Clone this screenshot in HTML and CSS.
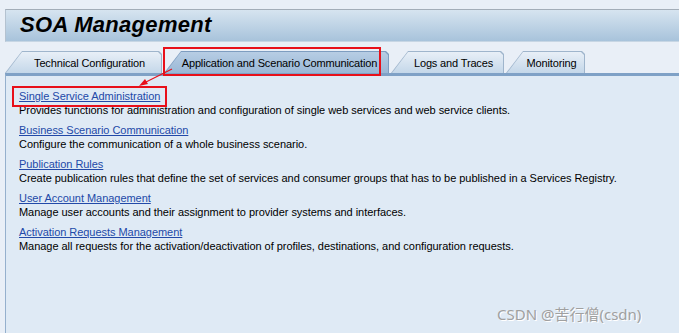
FILE: index.html
```html
<!DOCTYPE html>
<html lang="en">
<head>
    <meta charset="UTF-8">
    <title>SOA Management</title>
    <meta name="viewport" content="width=device-width,initial-scale=1">
    <link rel="stylesheet" href="styles.css">
</head>
<body>
    <div class="page">
        <div class="header">
            <h1 class="title">SOA Management</h1>
        </div>

        <!-- tab strip -->
        <div class="tabs">
            <div class="tab tab-tech"><span class="tab-inner">Technical Configuration</span></div>
            <div class="tab tab-app is-active"><span class="tab-inner">Application and Scenario Communication</span></div>
            <div class="tab tab-logs"><span class="tab-inner">Logs and Traces</span></div>
            <div class="tab tab-mon"><span class="tab-inner">Monitoring</span></div>
        </div>

        <div class="panel">
            <ul class="link-list">
                <li>
                    <a href="#">Single Service Administration</a>
                    <p>Provides functions for administration and configuration of single web services and web service clients.</p>
                </li>
                <li>
                    <a href="#">Business Scenario Communication</a>
                    <p>Configure the communication of a whole business scenario.</p>
                </li>
                <li>
                    <a href="#">Publication Rules</a>
                    <p>Create publication rules that define the set of services and consumer groups that has to be published in a Services Registry.</p>
                </li>
                <li>
                    <a href="#">User Account Management</a>
                    <p>Manage user accounts and their assignment to provider systems and interfaces.</p>
                </li>
                <li>
                    <a href="#">Activation Requests Management</a>
                    <p>Manage all requests for the activation/deactivation of profiles, destinations, and configuration requests.</p>
                </li>
            </ul>
        </div>

        <!-- red annotation marks -->
        <svg class="marks" width="679" height="333" viewBox="0 0 679 333">
            <rect x="164" y="48" width="216" height="27" fill="none" stroke="#e8101a" stroke-width="2"/>
            <rect x="13" y="87" width="153" height="19" fill="none" stroke="#e8101a" stroke-width="2"/>
            <line x1="172" y1="69" x2="146" y2="82" stroke="#e8101a" stroke-width="1.2"/>
            <polygon points="139,86 145,79 148,84" fill="#e8101a"/>
        </svg>

        <div class="watermark">CSDN @苦行僧(csdn)</div>
    </div>
</body>
</html>
```
FILE: styles.css
```css
html, body {margin:0;background:#e9eff7;color:#000;}
body {font-family:"Liberation Sans", Arial, sans-serif;font-size:11px;}
ul {list-style:none;margin:0;padding:0;}
p {margin:0;}
h1 {margin:0;}

.page {position:relative;width:679px;height:333px;overflow:hidden;padding:9px 0 0 5px;box-sizing:border-box;}

.header {height:33px;box-sizing:border-box;border-top:1px solid #a3adb8;border-left:1px solid #b4c2d0;border-bottom:1px solid #c7d6e4;background:linear-gradient(#d6e4f0, #a8c3db);}
.header .title {font-size:22px;font-style:italic;font-weight:bold;line-height:30px;padding-left:14px;color:#000;letter-spacing:.3px;}

.tabs {display:flex;gap:2px;margin-top:9px;height:22px;}
.tab {position:relative;flex:none;height:22px;background:#9fb5cc;clip-path:polygon(0 100%, 17px 0, calc(100% - 3px) 0, 100% 3px, 100% 100%);}
.tab .tab-inner {position:absolute;top:1px;left:1px;right:1px;bottom:0;display:flex;align-items:center;justify-content:center;padding-left:12px;font-size:11px;letter-spacing:-.15px;background:linear-gradient(#e8eff7, #c4d7e9);clip-path:polygon(0 100%, 16px 0, calc(100% - 3px) 0, 100% 3px, 100% 100%);}
.tab.is-active {background:#7e9dc0;}
.tab.is-active .tab-inner {background:linear-gradient(#b7cde4, #9ab8d6);padding-left:6px;}
.tab-tech {width:157px;}
.tab-app {width:225px;}
.tab-logs {width:113px;}
.tab-mon {width:79px;}

.panel {height:260px;border-top:3px solid #7fa1c6;border-left:1px solid #95b0cd;background:#dfeaf5;padding:13px 0 0 13px;box-sizing:border-box;}
.link-list li {line-height:14px;margin-bottom:6px;letter-spacing:-.04px;}
.link-list a {color:#2249a8;text-decoration:underline;}

.marks {position:absolute;top:0;left:0;pointer-events:none;}

.watermark {position:absolute;left:497px;top:303px;font-family:"Noto Sans", "Noto Sans CJK SC", sans-serif;font-size:15px;color:#a0a0a0;text-shadow:1px 1px 0 #fff;}
```
